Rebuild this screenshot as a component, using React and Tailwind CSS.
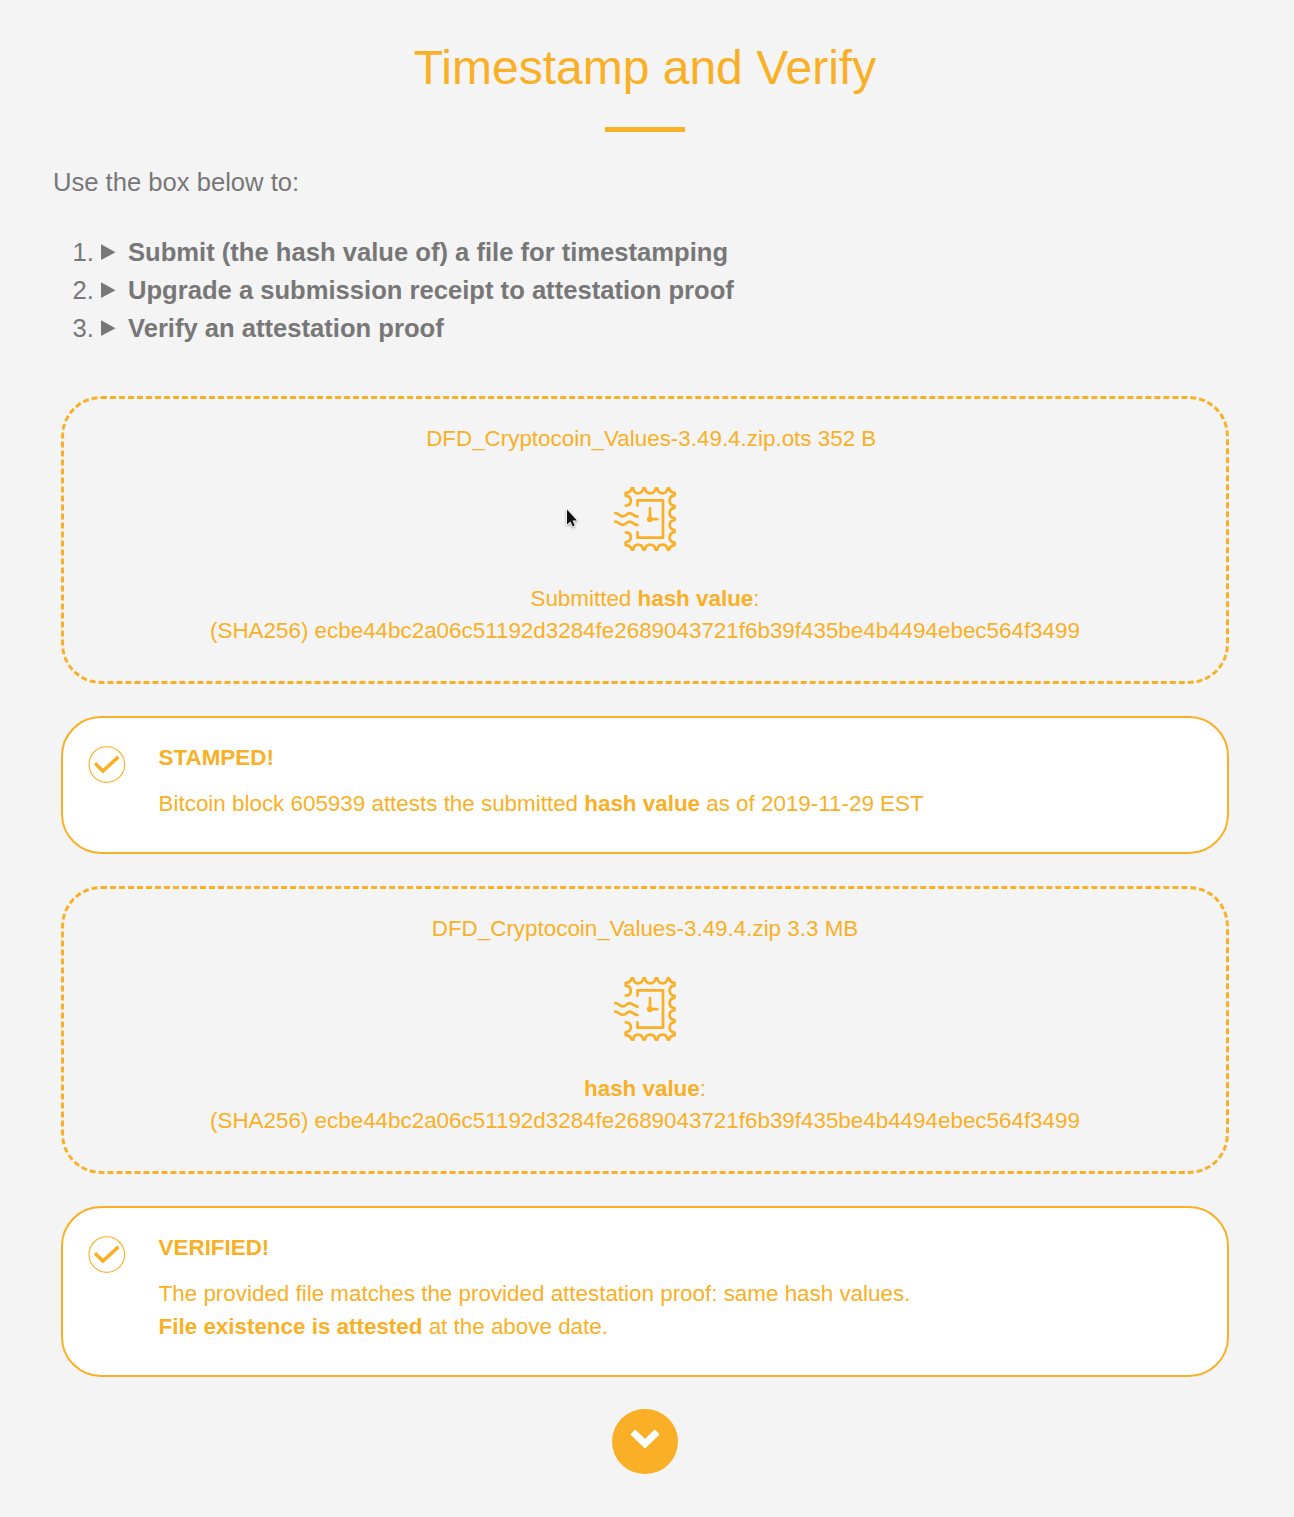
const HASH = "(SHA256) ecbe44bc2a06c51192d3284fe2689043721f6b39f435be4b4494ebec564f3499";

const STEPS = [
  "Submit (the hash value of) a file for timestamping",
  "Upgrade a submission receipt to attestation proof",
  "Verify an attestation proof",
];

function StampIcon() {
  return (
    <svg
      className="block h-16 w-16"
      viewBox="0 0 64 64"
      fill="none"
      stroke="currentColor"
      strokeWidth="2.7"
      strokeLinecap="round"
      strokeLinejoin="round"
    >
      <path d="M12.9 18.7C16.1 18.4 17.8 16.4 17.8 13.7C17.8 11 16 9.2 12.7 8.7V5.8C16.3 5.4 18 4.2 18.5 1.4H20.2C20.6 4.4 22.2 6.3 25 6.3S29.8 4.4 30.3 1.4H32C32.5 4.4 34.4 6.3 37.2 6.3S42 4.4 42.5 1.4H44.3C44.8 4.4 46.7 6.3 49.5 6.3S54.2 4.4 54.7 1.4H56.2C56.7 4.2 58.4 5.4 61.6 5.8V8.4C58.5 8.9 56.6 10.7 56.6 13.5S58.5 18.4 61.6 18.9V20.8C58.5 21.3 56.6 23.1 56.6 25.9S58.5 30.6 61.6 31.1V33C58.5 33.5 56.6 35.3 56.6 38.1S58.5 42.7 61.6 43.2V45.1C58.5 45.6 56.6 47.7 56.6 50.5S58.5 55.1 61.6 55.6V58.2C58.4 58.6 56.7 59.8 56.2 62.6H54.7C54.2 59.6 52.3 57.7 49.5 57.7S44.8 59.6 44.3 62.6H42.5C42 59.6 40 57.7 37.2 57.7S32.5 59.6 32 62.6H30.3C29.8 59.6 27.8 57.7 25 57.7S20.6 59.6 20.2 62.6H18.5C18 59.8 16.3 58.6 12.7 58.2V55.3C16 54.8 17.8 53 17.8 50.3C17.8 47.6 16.1 45.6 12.9 45.3" />
      <path d="M24.5 18.6V13.3H50V50.7H24.5V45.4" />
      <path d="M37 21V32.2H44.3" />
      <circle cx="36.8" cy="32.2" r="1.5" fill="currentColor" />
      <path d="M2.3 26.2C5.4 26 6.6 29.4 9.8 29.4C13.1 29.4 13.7 26.2 16.6 26.2C19.6 26.4 21.4 29.4 24.6 29.6" />
      <path d="M2.3 34.6C5.4 34.4 6.6 37.9 9.8 37.9C13.1 37.9 13.7 34.6 16.6 34.6C19.6 34.8 21.4 37.8 24.6 38" />
    </svg>
  );
}

function CheckIcon() {
  return (
    <svg className="block h-[38px] w-[38px]" viewBox="0 0 38 38" fill="none" stroke="currentColor">
      <circle cx="18.8" cy="18.6" r="17.8" strokeWidth="1.1" />
      <path d="M7 17.3L14.9 25L30.4 10.9" strokeWidth="3.6" />
    </svg>
  );
}

function HashBox({ file, label }) {
  return (
    <section className="flex h-[288px] flex-col items-center rounded-[40px] border-3 border-dashed border-[#f9b026] pt-6 text-center">
      <p>{file}</p>
      <div className="my-8">
        <StampIcon />
      </div>
      <p>{label}</p>
      <p>{HASH}</p>
    </section>
  );
}

function ResultCard({ title, children }) {
  return (
    <section className="flex rounded-[40px] border-2 border-[#f9b026] bg-white pt-6 pb-8 pl-[25px]">
      <div className="mt-1 w-[70.6px] shrink-0">
        <CheckIcon />
      </div>
      <div>
        <h2 className="mb-[13px] font-bold">{title}</h2>
        <div className="leading-[33px]">{children}</div>
      </div>
    </section>
  );
}

function Cursor() {
  return (
    <svg
      className="absolute top-[507px] left-[564px] h-6 w-[18px] drop-shadow-[0_1px_1px_rgba(0,0,0,0.35)]"
      viewBox="0 0 18 24"
    >
      <path
        d="M3 2.5V17.4L6.3 14.6L8.8 19.4L10.6 18.6L8.6 13.6H13Z"
        fill="#111"
        stroke="#fff"
        strokeWidth="1.6"
        strokeLinejoin="round"
        paintOrder="stroke"
      />
    </svg>
  );
}

export default function App() {
  return (
    <main className="relative min-h-[1517px] bg-[#f4f4f4] pr-1 font-['Liberation_Sans',Arial,sans-serif] text-[#777]">
      <header className="flex flex-col items-center pt-10">
        <h1 className="text-[48px] leading-[56px] text-[#f9b026]">Timestamp and Verify</h1>
        <div className="mt-[31px] h-[5px] w-20 bg-[#f9b026]" />
      </header>
      <div className="mt-[31px] pl-[53px] text-[25.6px] leading-[38px]">
        <p>Use the box below to:</p>
        <ol className="mt-8">
          {STEPS.map((step, i) => (
            <li key={step} className="flex items-center">
              <span className="w-[40.8px] text-right">{i + 1}.</span>
              <svg className="ml-[7.2px] h-4 w-[15px]" viewBox="0 0 15 16" fill="currentColor">
                <path d="M0 0.2L14.5 8.3L0 16Z" />
              </svg>
              <strong className="ml-3">{step}</strong>
            </li>
          ))}
        </ol>
      </div>
      <div className="mx-[61px] mt-[49px] flex flex-col gap-8 text-[22.4px] leading-8 text-[#f9b026]">
        <HashBox
          file={<span className="pl-[12.4px]">DFD_Cryptocoin_Values-3.49.4.zip.ots 352 B</span>}
          label={<>Submitted <strong>hash value</strong>:</>}
        />
        <ResultCard title="STAMPED!">
          <p>
            Bitcoin block 605939 attests the submitted <strong>hash value</strong> as of 2019-11-29 EST
          </p>
        </ResultCard>
        <HashBox file="DFD_Cryptocoin_Values-3.49.4.zip 3.3 MB" label={<><strong>hash value</strong>:</>} />
        <ResultCard title="VERIFIED!">
          <p>The provided file matches the provided attestation proof: same hash values.</p>
          <p><strong>File existence is attested</strong> at the above date.</p>
        </ResultCard>
      </div>
      <div className="mt-8 flex justify-center">
        <button className="flex h-[65px] w-[66px] justify-center rounded-full bg-[#f9b026] pt-5 text-white" aria-label="Next section">
          <svg className="h-5 w-[30px]" viewBox="0 0 30 20" fill="currentColor" stroke="currentColor">
            <path d="M5.3 2.1L15 11.5L24.7 2.1L28 5.4L15 18L2 5.4Z" strokeWidth="2.4" strokeLinejoin="round" />
          </svg>
        </button>
      </div>
      <Cursor />
    </main>
  );
}
